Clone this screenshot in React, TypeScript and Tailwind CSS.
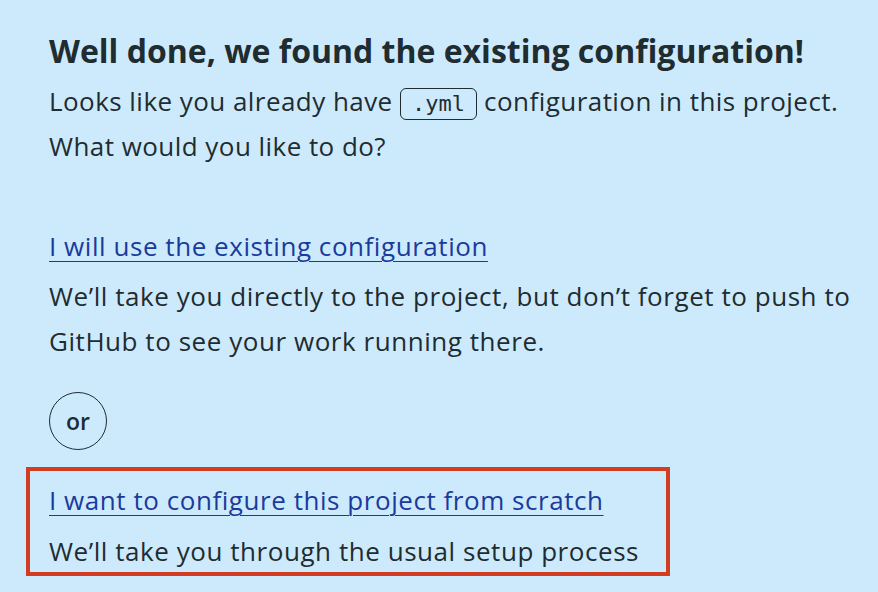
export default function App() {
  return (
    <div
      className="min-h-screen w-full bg-[#cdeafd] pl-[49px] pt-[31px] text-[#1f2c30]"
      style={{ fontFamily: "'Open Sans', sans-serif" }}
    >
      {/* Intro */}
      <h2 className="text-[32px] font-bold leading-[40px] tracking-[0px]">
        Well done, we found the existing configuration!
      </h2>
      <p className="mt-[8px] text-[26px] leading-[45px] tracking-[0.45px]">
        Looks like you already have{" "}
        <code
          className="inline-block rounded-[6px] border border-[#1f2c30] px-[11px] text-[22px] leading-[30px] tracking-normal"
          style={{ fontFamily: "'DejaVu Sans Mono', monospace" }}
        >
          .yml
        </code>{" "}
        configuration in this project.
        <br />
        What would you like to do?
      </p>

      {/* Option 1 */}
      <div className="mt-[55px] tracking-[0.55px]">
        <a href="#" className="text-[26px] leading-[45px] text-[#1a3b9c] underline underline-offset-[5px] decoration-1">
          I will use the existing configuration
        </a>
        <p className="mt-[5px] text-[26px] leading-[45px]">
          We’ll take you directly to the project, but don’t forget to push to
          <br />
          GitHub to see your work running there.
        </p>
      </div>

      {/* Divider */}
      <div className="mt-[28px] flex h-[58px] w-[58px] items-center justify-center rounded-full border border-[#1f2c30] text-[23px] font-semibold">
        or
      </div>

      {/* Option 2 */}
      <div className="-ml-[23px] mt-[17px] h-[109px] w-[644px] border-[4px] border-[#d23c20] pl-[19px] pt-[7px] tracking-[0.55px]">
        <a href="#" className="text-[26px] leading-[45px] text-[#1a3b9c] underline underline-offset-[5px] decoration-1">
          I want to configure this project from scratch
        </a>
        <p className="mt-[6px] text-[26px] leading-[45px]">We’ll take you through the usual setup process</p>
      </div>
    </div>
  );
}
